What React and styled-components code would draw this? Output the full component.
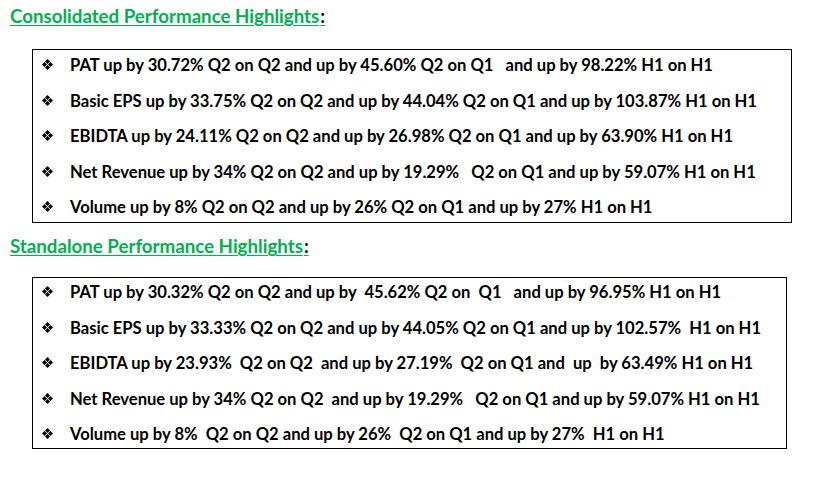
import React from "react";
import styled, { createGlobalStyle } from "styled-components";

const Global = createGlobalStyle`
  html, body { margin: 0; padding: 0; background: #ffffff; }
  body { font-family: "Lato", "Open Sans", sans-serif; color: #000; }
`;

const Page = styled.div`
  width: 829px;
  height: 481px;
  padding: 5px 0 0 10px;
  box-sizing: border-box;
  display: flex;
  flex-direction: column;
  align-items: flex-start;
`;

const Heading = styled.h2`
  margin: ${(p) => p.$mt}px 0 0 0;
  font-family: "Lato", "Open Sans", sans-serif;
  font-weight: 700;
  font-size: 18.7px;
  line-height: 22px;
  letter-spacing: 0;
  color: #00b050;
  text-decoration: underline;
  text-decoration-thickness: 1px;
  text-underline-offset: 2px;
`;

const Colon = styled.span`
  color: #000;
  padding-left: 1px;
`;

const Box = styled.ul`
  list-style: none;
  margin: ${(p) => p.$mt}px 0 0 22px;
  padding: ${(p) => p.$pt}px 0 ${(p) => p.$pb}px 0;
  width: ${(p) => p.$w}px;
  box-sizing: border-box;
  border: 1px solid #000;
  display: flex;
  flex-direction: column;
  gap: 9.5px;
`;

const Row = styled.li`
  display: flex;
  align-items: center;
  height: 26px;
  font-size: 16.6px;
  font-weight: 700;
  letter-spacing: 0;
  white-space: pre;
`;

const BulletSlot = styled.span`
  display: flex;
  align-items: center;
  width: 37px;
  padding-left: 9px;
  padding-bottom: 1px;
  box-sizing: border-box;
  flex: none;
`;

function Bullet() {
  return (
    <BulletSlot>
      <svg width="11" height="11" viewBox="0 0 11 11" aria-hidden="true">
        <g fill="#000">
          <polygon points="5.5,0 8,2.5 5.5,5 3,2.5" />
          <polygon points="5.5,6 8,8.5 5.5,11 3,8.5" />
          <polygon points="2.5,3 5,5.5 2.5,8 0,5.5" />
          <polygon points="8.5,3 11,5.5 8.5,8 6,5.5" />
        </g>
      </svg>
    </BulletSlot>
  );
}

const consolidated = [
  "PAT up by 30.72% Q2 on Q2 and up by 45.60% Q2 on Q1   and up by 98.22% H1 on H1",
  "Basic EPS up by 33.75% Q2 on Q2 and up by 44.04% Q2 on Q1 and up by 103.87% H1 on H1",
  "EBIDTA up by 24.11% Q2 on Q2 and up by 26.98% Q2 on Q1 and up by 63.90% H1 on H1",
  "Net Revenue up by 34% Q2 on Q2 and up by 19.29%   Q2 on Q1 and up by 59.07% H1 on H1",
  "Volume up by 8% Q2 on Q2 and up by 26% Q2 on Q1 and up by 27% H1 on H1",
];

const standalone = [
  "PAT up by 30.32% Q2 on Q2 and up by  45.62% Q2 on  Q1   and up by 96.95% H1 on H1",
  "Basic EPS up by 33.33% Q2 on Q2 and up by 44.05% Q2 on Q1 and up by 102.57%  H1 on H1",
  "EBIDTA up by 23.93%  Q2 on Q2  and up by 27.19%  Q2 on Q1 and  up  by 63.49% H1 on H1",
  "Net Revenue up by 34% Q2 on Q2  and up by 19.29%   Q2 on Q1 and up by 59.07% H1 on H1",
  "Volume up by 8%  Q2 on Q2 and up by 26%  Q2 on Q1 and up by 27%  H1 on H1",
];

function List({ items, ...rest }) {
  return (
    <Box {...rest}>
      {items.map((t) => (
        <Row key={t}>
          <Bullet />
          {t}
        </Row>
      ))}
    </Box>
  );
}

export default function App() {
  return (
    <>
      <Global />
      <Page>
        <Heading $mt={0}>
          Consolidated Performance Highlights<Colon>:</Colon>
        </Heading>
        <List items={consolidated} $mt={22} $pt={2} $pb={2} $w={760} />
        <Heading $mt={12}>
          Standalone Performance Highlights<Colon>:</Colon>
        </Heading>
        <List items={standalone} $mt={20} $pt={1} $pb={1} $w={755} />
      </Page>
    </>
  );
}
